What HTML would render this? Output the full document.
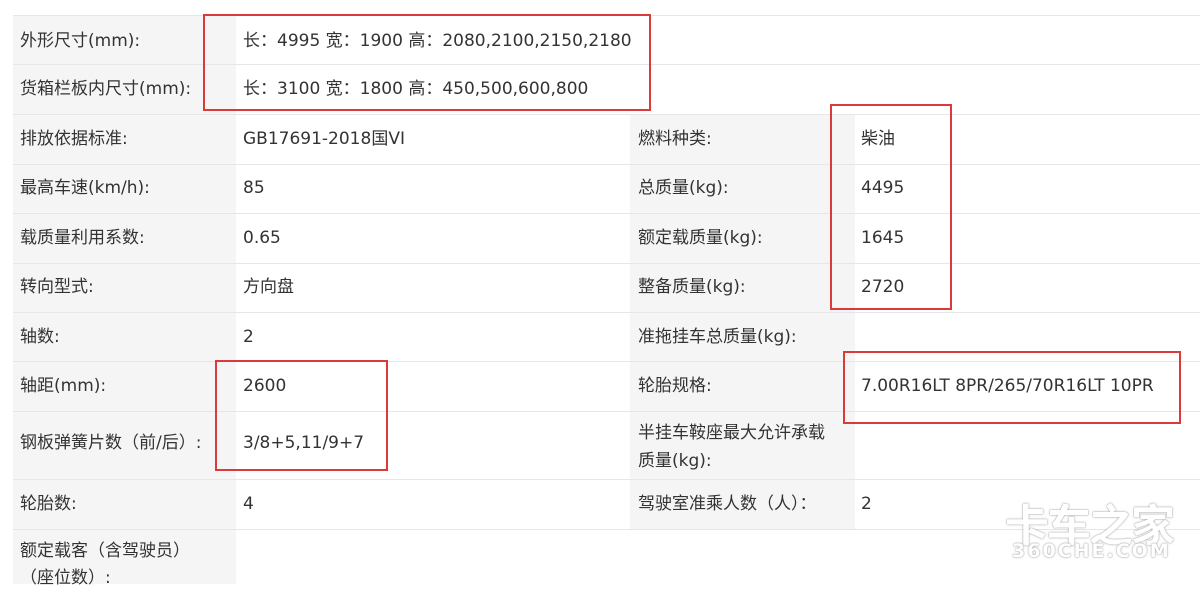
<!DOCTYPE html>
<html><head><meta charset="utf-8"><style>
body{margin:0;width:1200px;height:584px;background:#fff;overflow:hidden;position:relative;font-family:"DejaVu Sans","Noto Sans CJK SC",sans-serif;font-size:17px;color:#333}
.g{position:absolute;background:#f5f5f5}
.h{position:absolute;left:13px;right:0;height:1px;background:#e6e6e6}
.t{position:absolute;white-space:nowrap;line-height:22px}
.r{position:absolute;border:2px solid #d93a3a;box-sizing:border-box}
.wm{position:absolute;color:#fff;font-weight:bold;text-shadow:0 0 1px #999,0 0 2px #aaa}
</style></head><body>
<div class="g" style="left:13px;top:15px;width:223px;height:569px"></div>
<div class="g" style="left:630px;top:114px;width:225px;height:415px"></div>
<div class="h" style="top:15px"></div><div class="h" style="top:64px"></div><div class="h" style="top:114px"></div><div class="h" style="top:164px"></div><div class="h" style="top:213px"></div><div class="h" style="top:263px"></div><div class="h" style="top:312px"></div><div class="h" style="top:361px"></div><div class="h" style="top:411px"></div><div class="h" style="top:479px"></div><div class="h" style="top:529px"></div>

<div class="t" style="left:20px;top:30px">外形尺寸(mm):</div><div class="t" style="left:243px;top:30px">长：4995 宽：1900 高：2080,2100,2150,2180</div>
<div class="t" style="left:20px;top:78px">货箱栏板内尺寸(mm):</div><div class="t" style="left:243px;top:78px">长：3100 宽：1800 高：450,500,600,800</div>
<div class="t" style="left:20px;top:128px">排放依据标准:</div><div class="t" style="left:243px;top:128px">GB17691-2018国VI</div>
<div class="t" style="left:638px;top:128px">燃料种类:</div><div class="t" style="left:861px;top:128px">柴油</div>
<div class="t" style="left:20px;top:177px">最高车速(km/h):</div><div class="t" style="left:243px;top:177px">85</div>
<div class="t" style="left:638px;top:177px">总质量(kg):</div><div class="t" style="left:861px;top:177px">4495</div>
<div class="t" style="left:20px;top:227px">载质量利用系数:</div><div class="t" style="left:243px;top:227px">0.65</div>
<div class="t" style="left:638px;top:227px">额定载质量(kg):</div><div class="t" style="left:861px;top:227px">1645</div>
<div class="t" style="left:20px;top:276px">转向型式:</div><div class="t" style="left:243px;top:276px">方向盘</div>
<div class="t" style="left:638px;top:276px">整备质量(kg):</div><div class="t" style="left:861px;top:276px">2720</div>
<div class="t" style="left:20px;top:326px">轴数:</div><div class="t" style="left:243px;top:326px">2</div>
<div class="t" style="left:638px;top:326px">准拖挂车总质量(kg):</div>
<div class="t" style="left:20px;top:375px">轴距(mm):</div><div class="t" style="left:243px;top:375px">2600</div>
<div class="t" style="left:638px;top:375px">轮胎规格:</div><div class="t" style="left:861px;top:375px">7.00R16LT 8PR/265/70R16LT 10PR</div>
<div class="t" style="left:20px;top:432px">钢板弹簧片数（前/后）:</div><div class="t" style="left:243px;top:432px">3/8+5,11/9+7</div>
<div class="t" style="left:638px;top:422px">半挂车鞍座最大允许承载</div><div class="t" style="left:638px;top:450px">质量(kg):</div>
<div class="t" style="left:20px;top:493px">轮胎数:</div><div class="t" style="left:243px;top:493px">4</div>
<div class="t" style="left:638px;top:493px">驾驶室准乘人数（人）：</div><div class="t" style="left:861px;top:493px">2</div>
<div class="t" style="left:20px;top:540px">额定载客（含驾驶员）</div><div class="t" style="left:20px;top:567px">（座位数）:</div>

<div class="r" style="left:203px;top:14px;width:448px;height:97px"></div>
<div class="r" style="left:830px;top:104px;width:122px;height:206px"></div>
<div class="r" style="left:215px;top:360px;width:173px;height:111px"></div>
<div class="r" style="left:843px;top:351px;width:338px;height:73px"></div>

<div class="wm" style="left:1005px;top:490px;font-size:44px;letter-spacing:-2px;font-family:'Noto Sans CJK SC',sans-serif">卡车之家</div>
<div class="wm" style="left:1012px;top:540px;font-size:19px;letter-spacing:2px">360CHE.COM</div>
</body></html>
